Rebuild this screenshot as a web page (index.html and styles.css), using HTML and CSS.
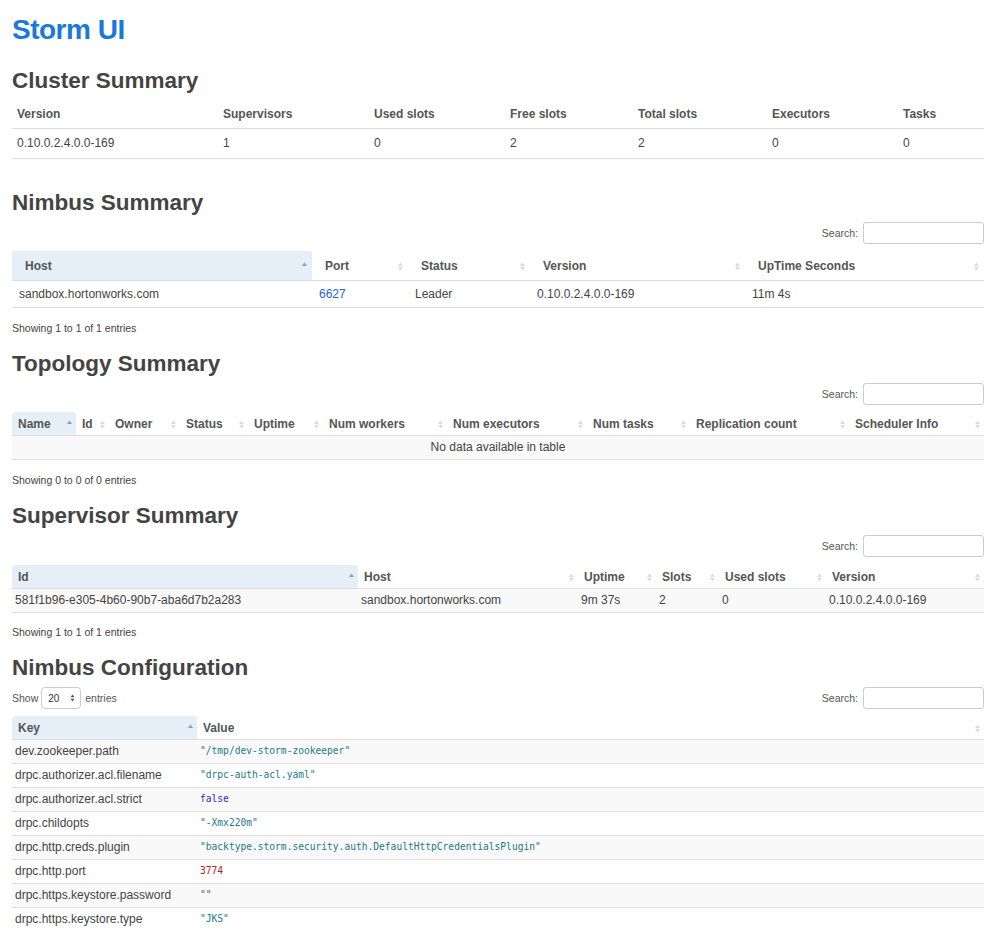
FILE: index.html
```html
<!DOCTYPE html>
<html lang="en">
<head>
<meta charset="utf-8">
<title>Storm UI</title>
<link rel="stylesheet" href="styles.css">
</head>
<body>
<div class="page">
  <h1 class="title">Storm UI</h1>

  <section class="cluster">
    <h2 class="heading">Cluster Summary</h2>
    <table class="plain">
      <colgroup>
        <col class="cw-206"><col class="cw-151"><col class="cw-136"><col class="cw-128"><col class="cw-134"><col class="cw-131"><col class="cw-86">
      </colgroup>
      <thead>
        <tr><th>Version</th><th>Supervisors</th><th>Used slots</th><th>Free slots</th><th>Total slots</th><th>Executors</th><th>Tasks</th></tr>
      </thead>
      <tbody>
        <tr><td>0.10.0.2.4.0.0-169</td><td>1</td><td>0</td><td>2</td><td>2</td><td>0</td><td>0</td></tr>
      </tbody>
    </table>
  </section>

  <section class="nimbus">
    <h2 class="heading">Nimbus Summary</h2>
    <div class="controls">
      <label class="search">Search: <input class="search-box" type="text"></label>
    </div>
    <table class="dt lg">
      <colgroup>
        <col class="cw-300"><col class="cw-96"><col class="cw-122"><col class="cw-215"><col class="cw-239">
      </colgroup>
      <thead>
        <tr>
          <th class="sorted"><div class="thc"><span>Host</span><svg class="sort" viewBox="0 0 5 9"><polygon class="asc" points="0,4 2.5,0.5 5,4"/></svg></div></th>
          <th><div class="thc"><span>Port</span><svg class="sort" viewBox="0 0 5 9"><polygon points="0,4 2.5,0.5 5,4"/><polygon points="0,5 2.5,8.5 5,5"/></svg></div></th>
          <th><div class="thc"><span>Status</span><svg class="sort" viewBox="0 0 5 9"><polygon points="0,4 2.5,0.5 5,4"/><polygon points="0,5 2.5,8.5 5,5"/></svg></div></th>
          <th><div class="thc"><span>Version</span><svg class="sort" viewBox="0 0 5 9"><polygon points="0,4 2.5,0.5 5,4"/><polygon points="0,5 2.5,8.5 5,5"/></svg></div></th>
          <th><div class="thc"><span>UpTime Seconds</span><svg class="sort" viewBox="0 0 5 9"><polygon points="0,4 2.5,0.5 5,4"/><polygon points="0,5 2.5,8.5 5,5"/></svg></div></th>
        </tr>
      </thead>
      <tbody>
        <tr><td>sandbox.hortonworks.com</td><td><a class="link" href="#">6627</a></td><td>Leader</td><td>0.10.0.2.4.0.0-169</td><td>11m 4s</td></tr>
      </tbody>
    </table>
    <div class="info">Showing 1 to 1 of 1 entries</div>
  </section>

  <section class="topology">
    <h2 class="heading">Topology Summary</h2>
    <div class="controls">
      <label class="search">Search: <input class="search-box" type="text"></label>
    </div>
    <table class="dt sm">
      <colgroup>
        <col class="cw-64"><col class="cw-33"><col class="cw-71"><col class="cw-68"><col class="cw-75"><col class="cw-124"><col class="cw-140"><col class="cw-103"><col class="cw-159"><col class="cw-135">
      </colgroup>
      <thead>
        <tr>
          <th class="sorted"><div class="thc"><span>Name</span><svg class="sort" viewBox="0 0 5 9"><polygon class="asc" points="0,4 2.5,0.5 5,4"/></svg></div></th>
          <th><div class="thc"><span>Id</span><svg class="sort" viewBox="0 0 5 9"><polygon points="0,4 2.5,0.5 5,4"/><polygon points="0,5 2.5,8.5 5,5"/></svg></div></th>
          <th><div class="thc"><span>Owner</span><svg class="sort" viewBox="0 0 5 9"><polygon points="0,4 2.5,0.5 5,4"/><polygon points="0,5 2.5,8.5 5,5"/></svg></div></th>
          <th><div class="thc"><span>Status</span><svg class="sort" viewBox="0 0 5 9"><polygon points="0,4 2.5,0.5 5,4"/><polygon points="0,5 2.5,8.5 5,5"/></svg></div></th>
          <th><div class="thc"><span>Uptime</span><svg class="sort" viewBox="0 0 5 9"><polygon points="0,4 2.5,0.5 5,4"/><polygon points="0,5 2.5,8.5 5,5"/></svg></div></th>
          <th><div class="thc"><span>Num workers</span><svg class="sort" viewBox="0 0 5 9"><polygon points="0,4 2.5,0.5 5,4"/><polygon points="0,5 2.5,8.5 5,5"/></svg></div></th>
          <th><div class="thc"><span>Num executors</span><svg class="sort" viewBox="0 0 5 9"><polygon points="0,4 2.5,0.5 5,4"/><polygon points="0,5 2.5,8.5 5,5"/></svg></div></th>
          <th><div class="thc"><span>Num tasks</span><svg class="sort" viewBox="0 0 5 9"><polygon points="0,4 2.5,0.5 5,4"/><polygon points="0,5 2.5,8.5 5,5"/></svg></div></th>
          <th><div class="thc"><span>Replication count</span><svg class="sort" viewBox="0 0 5 9"><polygon points="0,4 2.5,0.5 5,4"/><polygon points="0,5 2.5,8.5 5,5"/></svg></div></th>
          <th><div class="thc"><span>Scheduler Info</span><svg class="sort" viewBox="0 0 5 9"><polygon points="0,4 2.5,0.5 5,4"/><polygon points="0,5 2.5,8.5 5,5"/></svg></div></th>
        </tr>
      </thead>
      <tbody>
        <tr><td class="empty" colspan="10">No data available in table</td></tr>
      </tbody>
    </table>
    <div class="info">Showing 0 to 0 of 0 entries</div>
  </section>

  <section class="supervisor">
    <h2 class="heading">Supervisor Summary</h2>
    <div class="controls">
      <label class="search">Search: <input class="search-box" type="text"></label>
    </div>
    <table class="dt sm">
      <colgroup>
        <col class="cw-346"><col class="cw-220"><col class="cw-78"><col class="cw-63"><col class="cw-107"><col class="cw-158">
      </colgroup>
      <thead>
        <tr>
          <th class="sorted"><div class="thc"><span>Id</span><svg class="sort" viewBox="0 0 5 9"><polygon class="asc" points="0,4 2.5,0.5 5,4"/></svg></div></th>
          <th><div class="thc"><span>Host</span><svg class="sort" viewBox="0 0 5 9"><polygon points="0,4 2.5,0.5 5,4"/><polygon points="0,5 2.5,8.5 5,5"/></svg></div></th>
          <th><div class="thc"><span>Uptime</span><svg class="sort" viewBox="0 0 5 9"><polygon points="0,4 2.5,0.5 5,4"/><polygon points="0,5 2.5,8.5 5,5"/></svg></div></th>
          <th><div class="thc"><span>Slots</span><svg class="sort" viewBox="0 0 5 9"><polygon points="0,4 2.5,0.5 5,4"/><polygon points="0,5 2.5,8.5 5,5"/></svg></div></th>
          <th><div class="thc"><span>Used slots</span><svg class="sort" viewBox="0 0 5 9"><polygon points="0,4 2.5,0.5 5,4"/><polygon points="0,5 2.5,8.5 5,5"/></svg></div></th>
          <th><div class="thc"><span>Version</span><svg class="sort" viewBox="0 0 5 9"><polygon points="0,4 2.5,0.5 5,4"/><polygon points="0,5 2.5,8.5 5,5"/></svg></div></th>
        </tr>
      </thead>
      <tbody>
        <tr><td>581f1b96-e305-4b60-90b7-aba6d7b2a283</td><td>sandbox.hortonworks.com</td><td>9m 37s</td><td>2</td><td>0</td><td>0.10.0.2.4.0.0-169</td></tr>
      </tbody>
    </table>
    <div class="info">Showing 1 to 1 of 1 entries</div>
  </section>

  <section class="config">
    <h2 class="heading">Nimbus Configuration</h2>
    <div class="controls split">
      <div class="length">Show <div class="select"><span>20</span><svg class="sel-arrow" viewBox="0 0 5 8"><polygon points="0.5,3.3 2.5,0.5 4.5,3.3"/><polygon points="0.5,4.7 2.5,7.5 4.5,4.7"/></svg></div> entries</div>
      <label class="search">Search: <input class="search-box" type="text"></label>
    </div>
    <table class="dt sm">
      <colgroup>
        <col class="cw-185"><col>
      </colgroup>
      <thead>
        <tr>
          <th class="sorted"><div class="thc"><span>Key</span><svg class="sort" viewBox="0 0 5 9"><polygon class="asc" points="0,4 2.5,0.5 5,4"/></svg></div></th>
          <th><div class="thc"><span>Value</span><svg class="sort" viewBox="0 0 5 9"><polygon points="0,4 2.5,0.5 5,4"/><polygon points="0,5 2.5,8.5 5,5"/></svg></div></th>
        </tr>
      </thead>
      <tbody>
        <tr><td>dev.zookeeper.path</td><td><code class="str">"/tmp/dev-storm-zookeeper"</code></td></tr>
        <tr><td>drpc.authorizer.acl.filename</td><td><code class="str">"drpc-auth-acl.yaml"</code></td></tr>
        <tr><td>drpc.authorizer.acl.strict</td><td><code class="bool">false</code></td></tr>
        <tr><td>drpc.childopts</td><td><code class="str">"-Xmx220m"</code></td></tr>
        <tr><td>drpc.http.creds.plugin</td><td><code class="str">"backtype.storm.security.auth.DefaultHttpCredentialsPlugin"</code></td></tr>
        <tr><td>drpc.http.port</td><td><code class="num">3774</code></td></tr>
        <tr><td>drpc.https.keystore.password</td><td><code class="str">""</code></td></tr>
        <tr><td>drpc.https.keystore.type</td><td><code class="str">"JKS"</code></td></tr>
      </tbody>
    </table>
  </section>
</div>
</body>
</html>
```

FILE: styles.css
```css
html, body {
  margin: 0;
  padding: 0;
  overflow: hidden;
  background: #fff;
}

body {
  font-family: "Liberation Sans", Arial, Helvetica, sans-serif;
  font-size: 12px;
  color: #444;
}

.page {
  padding: 0 12px;
}

.title {
  margin: 14px 0 0;
  font-size: 28px;
  line-height: 32px;
  letter-spacing: -0.5px;
  font-weight: bold;
  color: #1a78d8;
}

.heading {
  margin: 16px 0 0;
  font-size: 22.5px;
  line-height: 26px;
  font-weight: bold;
  color: #444;
}

.cluster .heading {
  margin-top: 21.5px;
}

.nimbus .heading {
  margin-top: 31px;
}

table {
  width: 100%;
  table-layout: fixed;
  border-collapse: separate;
  border-spacing: 0;
}

th {
  text-align: left;
  font-weight: bold;
  color: #555;
  white-space: nowrap;
}

td {
  white-space: nowrap;
  overflow: hidden;
}

/* column widths */
.cw-33 { width: 33px; }
.cw-63 { width: 63px; }
.cw-64 { width: 64px; }
.cw-68 { width: 68px; }
.cw-71 { width: 71px; }
.cw-75 { width: 75px; }
.cw-78 { width: 78px; }
.cw-86 { width: 86px; }
.cw-96 { width: 96px; }
.cw-103 { width: 103px; }
.cw-107 { width: 107px; }
.cw-122 { width: 122px; }
.cw-124 { width: 124px; }
.cw-128 { width: 128px; }
.cw-131 { width: 131px; }
.cw-134 { width: 134px; }
.cw-135 { width: 135px; }
.cw-136 { width: 136px; }
.cw-140 { width: 140px; }
.cw-151 { width: 151px; }
.cw-158 { width: 158px; }
.cw-159 { width: 159px; }
.cw-185 { width: 185px; }
.cw-206 { width: 206px; }
.cw-215 { width: 215px; }
.cw-220 { width: 220px; }
.cw-239 { width: 239px; }
.cw-300 { width: 300px; }
.cw-346 { width: 346px; }

/* cluster summary (plain bootstrap table) */
.plain {
  margin-top: 4.5px;
}

.plain th {
  padding: 9px 5px 7px;
  line-height: 14px;
}

.plain td {
  padding: 7px 5px 8px;
  line-height: 14px;
  border-top: 1px solid #ddd;
  border-bottom: 1px solid #ddd;
}

/* controls above datatables */
.controls {
  margin-top: 6px;
  height: 22px;
  display: flex;
  justify-content: flex-end;
  align-items: center;
  font-size: 10.5px;
  color: #555;
}

.controls.split {
  justify-content: space-between;
}

.search {
  display: flex;
  align-items: center;
  gap: 5px;
}

.search-box {
  width: 121px;
  height: 22px;
  margin: 0;
  padding: 0 4px;
  box-sizing: border-box;
  border: 1px solid #ccc;
  border-radius: 3px;
  background: #fff;
}

.length {
  display: flex;
  align-items: center;
}

.select {
  margin: 0 4px 0 3px;
  width: 40px;
  height: 22px;
  box-sizing: border-box;
  padding: 0 5px 0 6px;
  border: 1px solid #ccc;
  border-radius: 4px;
  display: flex;
  align-items: center;
  justify-content: space-between;
  font-size: 10px;
  color: #333;
}

.sel-arrow {
  width: 5px;
  height: 8px;
  fill: #555;
}

/* datatables */
.dt {
  margin-top: 7px;
}

.supervisor .dt {
  margin-top: 8px;
}

.dt th {
  border-bottom: 1px solid #ddd;
}

.dt td {
  border-bottom: 1px solid #ddd;
}

.dt th.sorted {
  background: #e5eff7;
  border-radius: 3px 3px 0 0;
}

.thc {
  display: flex;
  justify-content: space-between;
  align-items: center;
}

.sort {
  flex: none;
  width: 5px;
  height: 9px;
  fill: #dcdcdc;
}

.sort .asc {
  fill: #8e98d8;
}

.dt.lg th {
  padding: 8px 5px 7px 13px;
  line-height: 14px;
}

.dt.lg td {
  padding: 6px 7px;
  line-height: 14px;
}

.dt.sm th {
  padding: 6px 4px 4px 6px;
  line-height: 13px;
}

.dt.sm td {
  padding: 4px 3px 5px;
  line-height: 14px;
}

.dt.sm tbody tr:nth-child(odd) td {
  background: #f9f9f9;
}

.dt td.empty {
  text-align: center;
}

.link {
  color: #2563d1;
  text-decoration: none;
}

.info {
  margin-top: 13px;
  font-size: 10.5px;
  line-height: 14px;
  color: #444;
}

.supervisor .info {
  margin-top: 12px;
}

code {
  display: inline-block;
  vertical-align: top;
  line-height: 14px;
  font-family: "DejaVu Sans Mono", "Liberation Mono", monospace;
  font-size: 9.6px;
}

.str { color: #1d7a88; }
.bool { color: #2a2ad2; }
.num { color: #a8261e; }
```
